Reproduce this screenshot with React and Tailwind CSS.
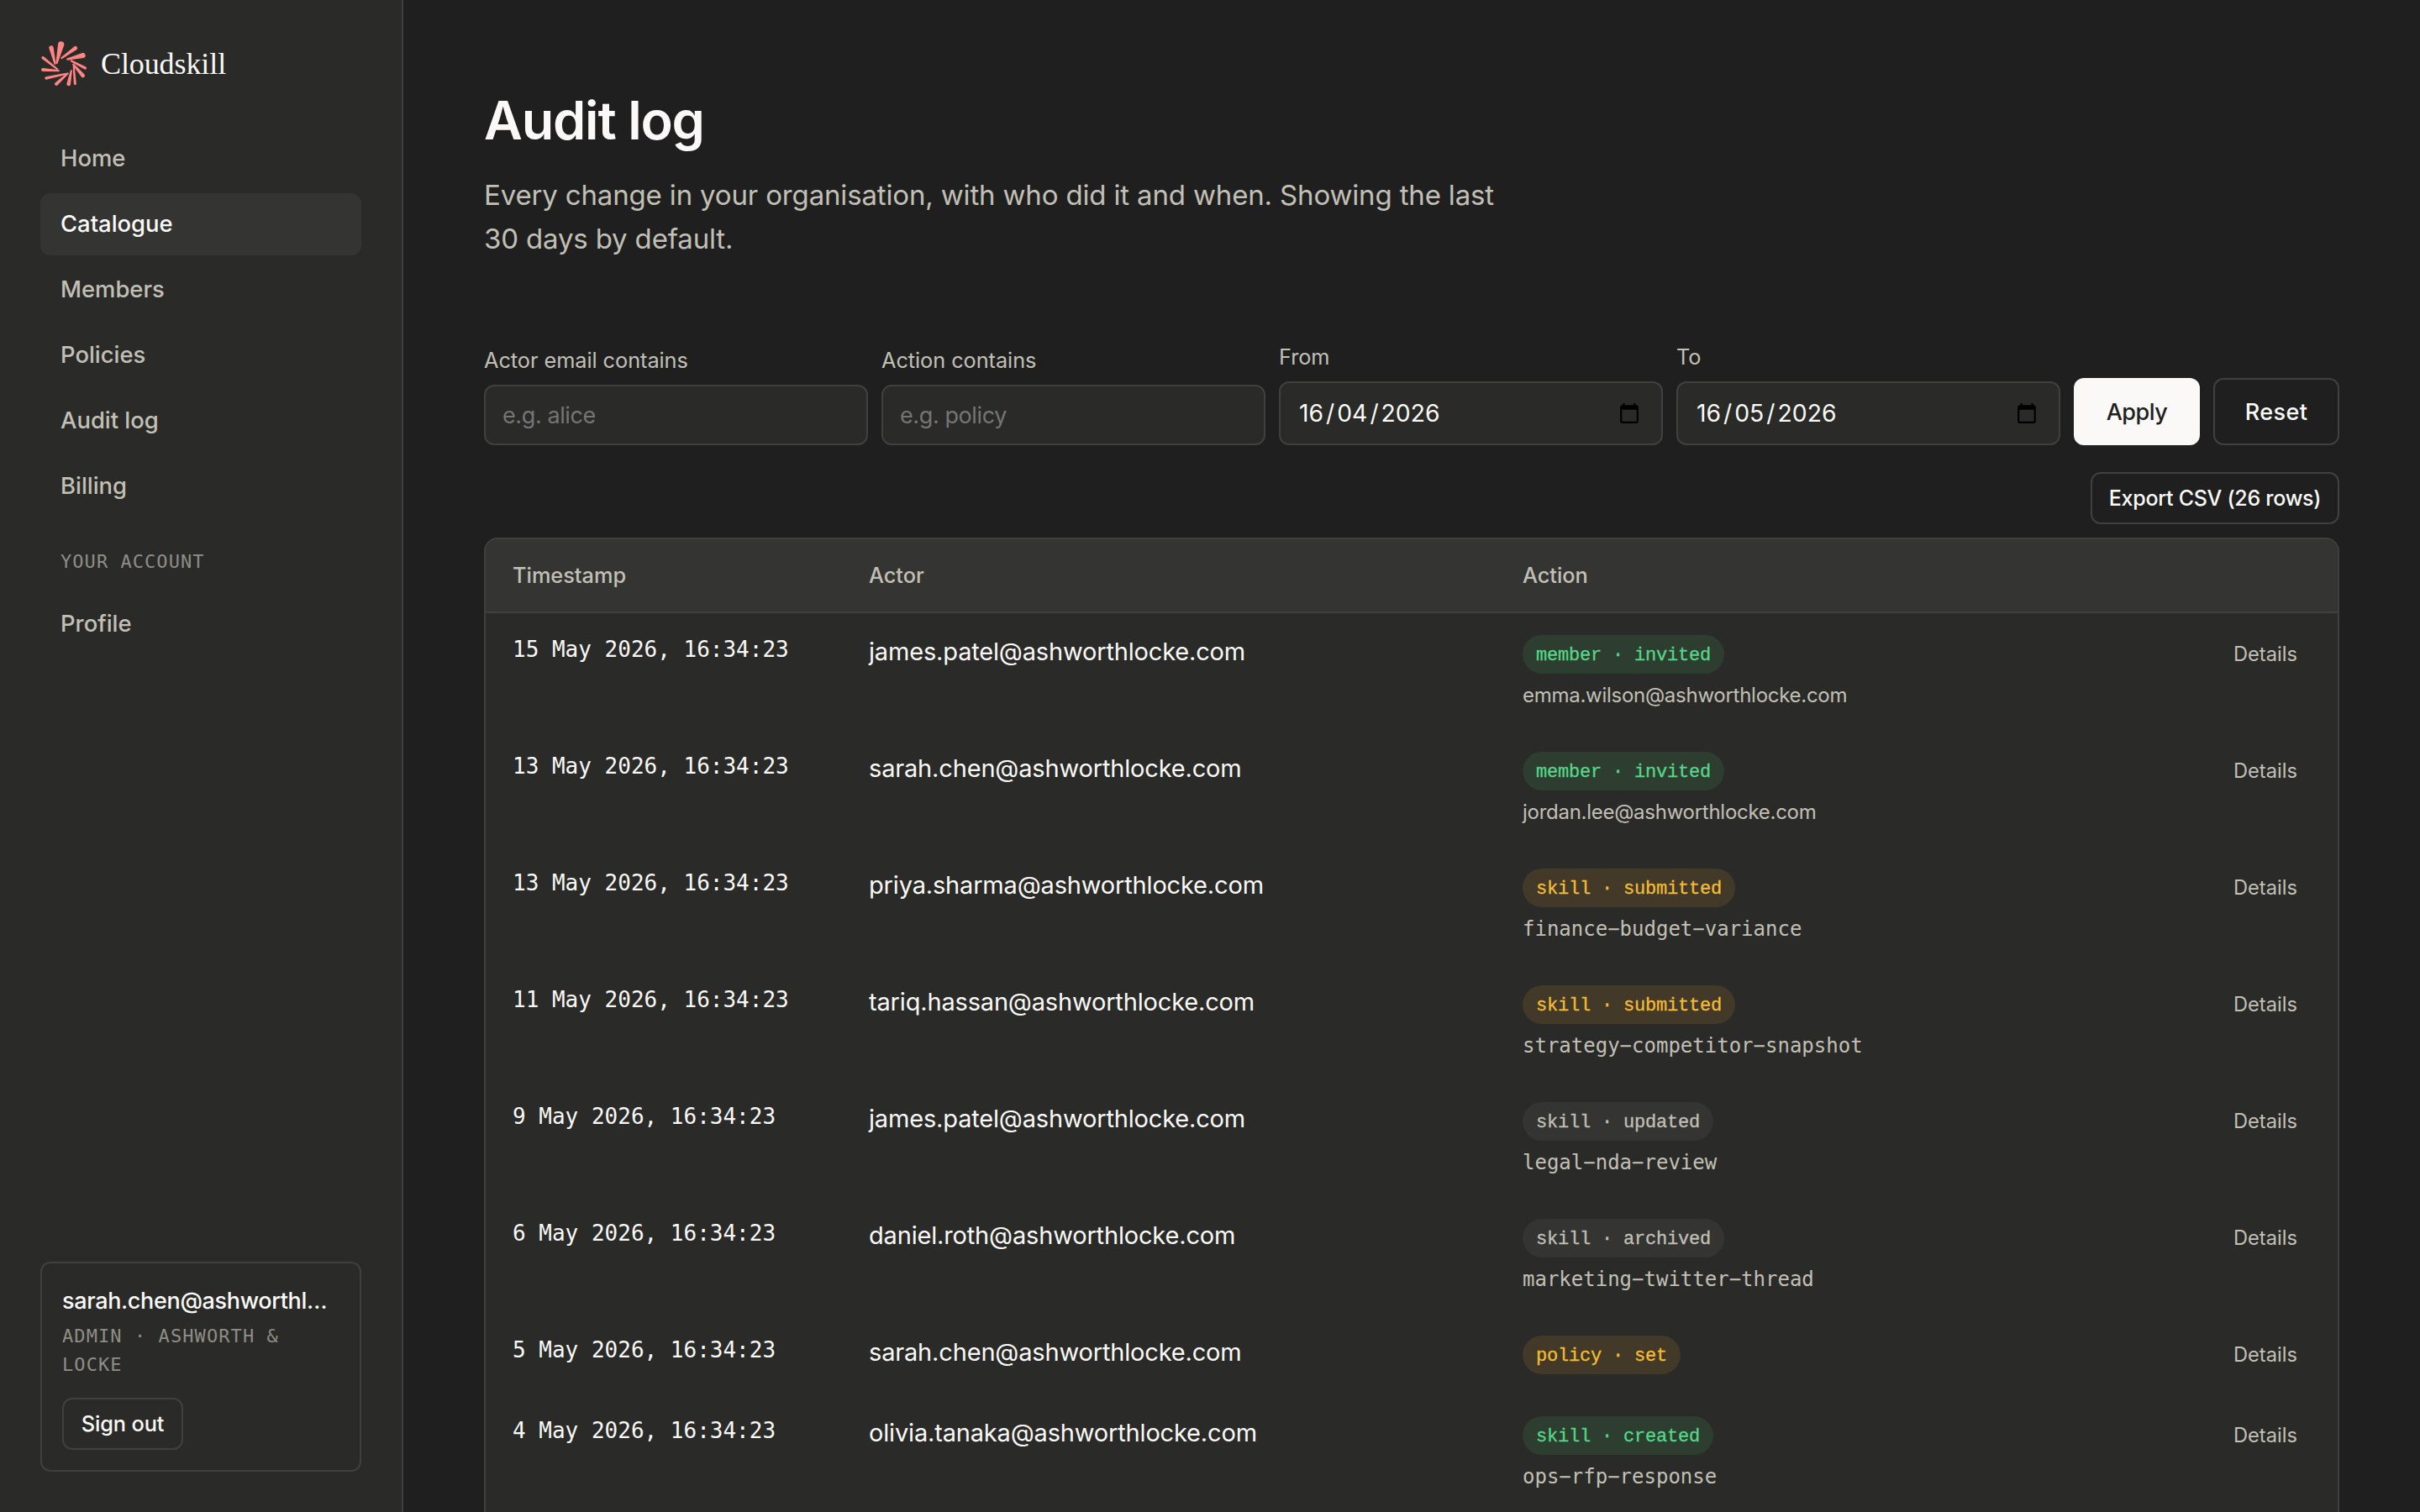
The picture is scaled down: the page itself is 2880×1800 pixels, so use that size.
import React from 'react';
import clsx from 'clsx';

const navItems = ['Home', 'Catalogue', 'Members', 'Policies', 'Audit log', 'Billing'];

const events = [
  { time: '15 May 2026, 16:34:23', actor: 'james.patel@ashworthlocke.com', action: 'member · invited', tone: 'green', target: 'emma.wilson@ashworthlocke.com' },
  { time: '13 May 2026, 16:34:23', actor: 'sarah.chen@ashworthlocke.com', action: 'member · invited', tone: 'green', target: 'jordan.lee@ashworthlocke.com' },
  { time: '13 May 2026, 16:34:23', actor: 'priya.sharma@ashworthlocke.com', action: 'skill · submitted', tone: 'amber', target: 'finance-budget-variance' },
  { time: '11 May 2026, 16:34:23', actor: 'tariq.hassan@ashworthlocke.com', action: 'skill · submitted', tone: 'amber', target: 'strategy-competitor-snapshot' },
  { time: '9 May 2026, 16:34:23', actor: 'james.patel@ashworthlocke.com', action: 'skill · updated', tone: 'neutral', target: 'legal-nda-review' },
  { time: '6 May 2026, 16:34:23', actor: 'daniel.roth@ashworthlocke.com', action: 'skill · archived', tone: 'neutral', target: 'marketing-twitter-thread' },
  { time: '5 May 2026, 16:34:23', actor: 'sarah.chen@ashworthlocke.com', action: 'policy · set', tone: 'amber' },
  { time: '4 May 2026, 16:34:23', actor: 'olivia.tanaka@ashworthlocke.com', action: 'skill · created', tone: 'green', target: 'ops-rfp-response' },
];

const tones = {
  green: 'bg-[#2d3e30] text-[#57d788]',
  amber: 'bg-[#433929] text-[#f4bd32]',
  neutral: 'bg-[#343432] text-[#c2c0b6]',
};

// outer x, outer y, radius of the round end, inner x, inner y
const petals = [
  [74, 15, 11, 58, 84],
  [125, 28, 7, 74, 65],
  [152, 54, 9, 94, 68],
  [160, 99, 5, 108, 72],
  [152, 126, 7, 116, 84],
  [124, 155, 4.5, 119, 90],
  [101, 156, 7, 111, 106],
  [57, 156, 6, 100, 116],
  [21, 135, 5, 93, 119],
  [9, 105, 6, 68, 109],
  [9, 62, 5, 62, 104],
  [39, 27, 8, 53, 86],
];

const Logo = () => (
  <svg viewBox="0 0 168 168" className="w-14 h-14" fill="#ff8585">
    {petals.map(([x1, y1, r, x2, y2]) => {
      const len = Math.hypot(x2 - x1, y2 - y1);
      const nx = -(y2 - y1) / len;
      const ny = (x2 - x1) / len;
      const d = `M${x1 + nx * r} ${y1 + ny * r}L${x2 + nx * 3} ${y2 + ny * 3}L${x2 - nx * 3} ${y2 - ny * 3}L${x1 - nx * r} ${y1 - ny * r}A${r} ${r} 0 0 0 ${x1 + nx * r} ${y1 + ny * r}Z`;
      return <path key={`${x1}-${y1}`} d={d} />;
    })}
  </svg>
);

const NavItem = ({ label, active }) => (
  <a
    className={clsx(
      'flex items-center h-[74px] px-6 rounded-xl text-[27.4px] font-medium',
      active ? 'bg-[#343432] text-[#faf9f7]' : 'text-[#c2c0b6]'
    )}
  >
    {label}
  </a>
);

const Sidebar = () => (
  <aside className="w-[480px] h-full shrink-0 flex flex-col bg-[#2a2a28] border-r-2 border-[#40403e] px-12 pt-12 pb-12">
    <div className="flex items-center h-14 mb-12">
      <Logo />
      <span className="ml-4 font-['Liberation_Serif',serif] text-[36px] tracking-[-0.1px] text-[#faf9f7]">Cloudskill</span>
    </div>
    <nav className="flex flex-col gap-1 w-[382px]">
      {navItems.map((label) => (
        <NavItem key={label} label={label} active={label === 'Catalogue'} />
      ))}
      <div className="mt-[32px] mb-[17px] px-6 h-[33px] leading-[33px] font-['DejaVu_Sans_Mono',monospace] text-[22px] tracking-[1.05px] text-[#8f8e86]">
        YOUR ACCOUNT
      </div>
      <NavItem label="Profile" />
    </nav>
    <div className="mt-auto w-[382px] h-[250px] rounded-xl border-2 border-[#40403e] p-6">
      <div className="truncate text-[27px] leading-[42px] tracking-[-0.35px] font-medium text-[#faf9f7]">
        sarah.chen@ashworthlocke.com
      </div>
      <div className="mt-1 leading-[34px] font-['DejaVu_Sans_Mono',monospace] text-[22px] tracking-[1.08px] text-[#8f8e86]">
        ADMIN · ASHWORTH &amp; LOCKE
      </div>
      <button className="mt-[22px] h-[62px] w-[144px] rounded-xl border-2 border-[#40403e] text-[25.3px] tracking-[-0.1px] font-medium text-[#faf9f7]">
        Sign out
      </button>
    </div>
  </aside>
);

const CalendarIcon = () => (
  <svg viewBox="0 0 24 24" className="ml-auto w-[26px] h-[26px]" fill="#000">
    <path d="M20 3h-1V1h-2v2H7V1H5v2H4c-1.1 0-2 .9-2 2v16c0 1.1.9 2 2 2h16c1.1 0 2-.9 2-2V5c0-1.1-.9-2-2-2zm0 18H4V8h16v13z" />
  </svg>
);

const Field = ({ label, children }) => (
  <label className="flex-1 min-w-0 flex flex-col gap-2.5">
    <span className="text-[25.3px] leading-[38px] tracking-[-0.05px] text-[#c2c0b6]">{label}</span>
    {children}
  </label>
);

const TextField = ({ label, placeholder }) => (
  <Field label={label}>
    <input
      className="w-full h-[72px] rounded-xl border-2 border-[#40403e] bg-[#2a2a28] px-5 text-[27px] tracking-[-0.4px] placeholder:text-[#757575] outline-none"
      placeholder={placeholder}
    />
  </Field>
);

const DateField = ({ label, day, month, year }) => (
  <Field label={label}>
    <div className="flex items-center h-[76px] rounded-xl border-2 border-[#40403e] bg-[#2a2a28] pl-[22px] pr-[25px] text-[28.3px] text-[#faf9f7]">
      <span>{day}</span>
      <span className="mx-[3px]">/</span>
      <span>{month}</span>
      <span className="mx-[3px]">/</span>
      <span>{year}</span>
      <CalendarIcon />
    </div>
  </Field>
);

const EventRow = ({ event }) => {
  // slugs are set in mono, e-mail addresses in the body font
  const isEmail = event.target && event.target.includes('@');

  return (
    <div className={clsx('flex items-start pl-8 pr-12 pt-6', event.target ? 'h-[139px]' : 'h-[96px]')}>
      <div className="w-[424px] leading-[38px] font-['DejaVu_Sans_Mono',monospace] text-[26px] text-[#faf9f7]">{event.time}</div>
      <div className="w-[778px] leading-[43px] text-[29px] tracking-[-0.17px] text-[#faf9f7]">{event.actor}</div>
      <div className="flex-1 pt-0.5">
        <div
          className={clsx(
            "w-fit h-[46px] leading-[49px] px-4 rounded-full font-['Liberation_Mono',monospace] text-[22px] tracking-[-0.2px] [-webkit-text-stroke:0.3px]",
            tones[event.tone]
          )}
        >
          {event.action}
        </div>
        {event.target && (
          <div
            className={clsx(
              'mt-[7px] leading-[38px] text-[#c2c0b6]',
              isEmail ? 'text-[24px] tracking-[-0.27px]' : "font-['DejaVu_Sans_Mono',monospace] text-[24px]"
            )}
          >
            {event.target.replaceAll('-', '\u2212')}
          </div>
        )}
      </div>
      <button className="leading-[49px] text-[23.7px] text-[#c2c0b6]">Details</button>
    </div>
  );
};

const App = () => {
  return (
    <div className="w-[2880px] h-[1800px] flex overflow-hidden bg-[#1f1f1f] font-['Inter',sans-serif]">
      <Sidebar />
      <main className="flex-1 px-24 pt-[108px] overflow-hidden">
        <h1 className="text-[63px] leading-[70px] tracking-[-1.2px] font-semibold text-[#faf9f7]">Audit log</h1>
        <p className="mt-7 w-[1280px] text-[33px] leading-[52px] tracking-[-0.16px] text-[#c2c0b6]">
          Every change in your organisation, with who did it and when. Showing the last
          <br />
          30 days by default.
        </p>

        <div className="mt-24 flex items-end gap-4">
          <TextField label="Actor email contains" placeholder="e.g. alice" />
          <TextField label="Action contains" placeholder="e.g. policy" />
          <DateField label="From" day="16" month="04" year="2026" />
          <DateField label="To" day="16" month="05" year="2026" />
          <button className="w-[150px] h-20 pt-0.5 rounded-xl bg-[#faf9f7] text-[27px] tracking-[-0.5px] font-medium text-[#1f1f1f]">Apply</button>
          <button className="w-[150px] h-20 pt-0.5 rounded-xl border-2 border-[#40403e] text-[27px] tracking-[0.4px] font-medium text-[#faf9f7]">Reset</button>
        </div>

        <div className="mt-8 flex justify-end">
          <button className="w-[296px] h-[62px] pt-0.5 rounded-xl border-2 border-[#40403e] text-[25px] tracking-[-0.28px] font-medium text-[#faf9f7]">
            Export CSV (26 rows)
          </button>
        </div>

        <div className="mt-4 h-[1300px] rounded-2xl border-2 border-[#40403e] bg-[#2a2a28] overflow-hidden">
          <div className="flex items-center h-[88px] pl-8 border-b-2 border-[#40403e] bg-[#343432] text-[25.3px] font-medium text-[#c2c0b6]">
            <div className="w-[424px]">Timestamp</div>
            <div className="w-[778px]">Actor</div>
            <div>Action</div>
          </div>
          {events.map((event, i) => (
            <EventRow key={i} event={event} />
          ))}
        </div>
      </main>
    </div>
  );
};

export default App;
